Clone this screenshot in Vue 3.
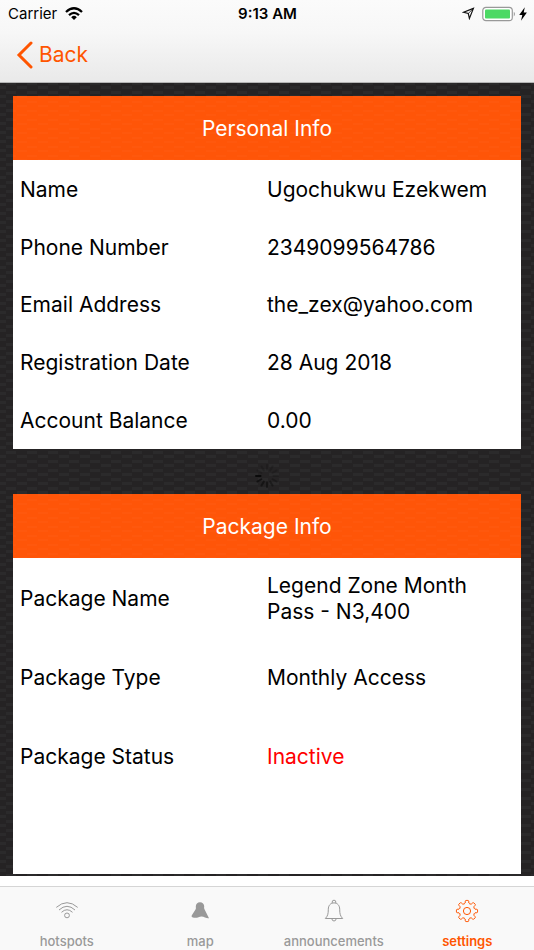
<script setup>
const personal = [
  ['Name', 'Ugochukwu Ezekwem'],
  ['Phone Number', '2349099564786'],
  ['Email Address', 'the_zex@yahoo.com'],
  ['Registration Date', '28 Aug 2018'],
  ['Account Balance', '0.00'],
]

const packageInfo = [
  { label: 'Package Name', value: 'Legend Zone Month Pass - N3,400' },
  { label: 'Package Type', value: 'Monthly Access' },
  { label: 'Package Status', value: 'Inactive', alert: true },
]

const tabs = [
  { id: 'hotspots' },
  { id: 'map' },
  { id: 'announcements' },
  { id: 'settings', active: true },
]

// Outline of an eight-toothed gear centred in a 24-unit box.
const gearPoint = (radius, degrees) => {
  const a = (degrees * Math.PI) / 180
  return `${(12 + radius * Math.sin(a)).toFixed(2)} ${(12 - radius * Math.cos(a)).toFixed(2)}`
}
const gearPath =
  Array.from({ length: 8 }, (_, i) => {
    const c = i * 45
    return (
      `${i ? 'L' : 'M'}${gearPoint(8.2, c - 13)}` +
      `L${gearPoint(9.9, c - 10)}Q${gearPoint(10.6, c - 9)} ${gearPoint(10.6, c - 5)}` +
      `L${gearPoint(10.6, c + 5)}Q${gearPoint(10.6, c + 9)} ${gearPoint(9.9, c + 10)}` +
      `L${gearPoint(8.2, c + 13)}Q${gearPoint(7, c + 22.5)} ${gearPoint(8.2, c + 32)}`
    )
  }).join('') + 'Z'

// The spinner's darkest blade points left and fades anticlockwise.
const spokes = [0.2, 0.2, 0.2, 0.2, 0.3, 0.4, 0.5, 0.55, 0.65, 0.9, 0.2, 0.2].map(
  (opacity, i) => ({ angle: i * 30, opacity }),
)
</script>

<template>
  <div class="screen">
    <header class="top">
      <div class="status">
        <span class="carrier">
          Carrier
          <svg width="18" height="14" viewBox="0 0 18 14" fill="none" stroke="#000" stroke-width="2.3" aria-hidden="true">
            <path d="M1 5Q9-2.4 17 5M4 8.2Q9 3.6 14 8.2" />
            <path d="M6.2 10.2Q9 7.5 11.8 10.2L9 13Z" fill="#000" stroke="none" />
          </svg>
        </span>
        <span class="time">9:13 AM</span>
        <span class="power">
          <svg width="13" height="13" viewBox="0 0 13 13" fill="none" stroke="#111" stroke-width="1.2" stroke-linejoin="miter" aria-hidden="true">
            <path d="M11.4 1.4 1.6 5.3 6.3 6.5 7.4 11.4Z" />
            <path d="M11.4 1.4 6.3 6.5" stroke-width=".8" />
          </svg>
          <svg width="34" height="16" viewBox="0 0 34 16" aria-hidden="true">
            <rect x=".8" y="1.3" width="29.5" height="13.4" rx="3.2" fill="#fff" stroke="#999" stroke-width="1.2" />
            <rect x="3" y="3.5" width="25" height="9" rx="1" fill="#4cd964" />
            <path d="M31.8 5.8Q33.8 8 31.8 10.4Z" fill="#888" />
          </svg>
          <svg width="8" height="14" viewBox="0 0 8 14" aria-hidden="true">
            <path d="M5.8.3.2 7.9H3.3L2 13.8 7.9 5.6H4.7Z" />
          </svg>
        </span>
      </div>
      <nav class="bar">
        <a class="back" href="#back">
          <svg width="18" height="28" viewBox="0 0 18 28" fill="none" stroke="currentColor" stroke-width="3" stroke-linecap="round" stroke-linejoin="miter" aria-hidden="true">
            <path d="M15 2 3 14 15 26" />
          </svg>
          Back
        </a>
      </nav>
    </header>

    <main class="content">
      <section class="card">
        <h2>Personal Info</h2>
        <table class="personal">
          <tbody>
            <tr v-for="[label, value] in personal" :key="label">
              <th scope="row">{{ label }}</th>
              <td>{{ value }}</td>
            </tr>
          </tbody>
        </table>
      </section>

      <div class="loading">
        <svg width="26" height="26" viewBox="-13 -13 26 26" stroke="#080808" stroke-width="2" stroke-linecap="round" aria-hidden="true">
          <path v-for="s in spokes" :key="s.angle" d="M0-6.5V-11" :transform="`rotate(${s.angle})`" :opacity="s.opacity" />
        </svg>
      </div>

      <section class="card">
        <h2>Package Info</h2>
        <table class="package">
          <tbody>
            <tr v-for="row in packageInfo" :key="row.label">
              <th scope="row">{{ row.label }}</th>
              <td :class="{ alert: row.alert }">{{ row.value }}</td>
            </tr>
            <tr>
              <td colspan="2"></td>
            </tr>
          </tbody>
        </table>
      </section>
    </main>

    <nav class="tabs">
      <a v-for="tab in tabs" :key="tab.id" :href="`#${tab.id}`" :class="{ active: tab.active }">
        <svg width="24" height="24" viewBox="0 0 24 24" fill="none" stroke="currentColor" stroke-width="1" stroke-linejoin="round" aria-hidden="true">
          <template v-if="tab.id === 'hotspots'">
            <path d="M1.3 8.4Q12-1 22.7 8.4M4 11Q12 3.6 20 11M6.5 13.3Q12 8.2 17.5 13.3" />
            <circle cx="12" cy="16.4" r="2.4" />
          </template>
          <path
            v-else-if="tab.id === 'map'"
            fill="currentColor"
            stroke="none"
            d="M12 3.2C9.5 3.2 7.8 5 7.8 7.2C7.8 8.7 8.2 9.3 7.5 10.4L3.7 16.5Q3 18.2 4.8 18.5Q8 19.3 10.5 18.2Q14 16.8 17 18.6Q19 19.4 21 19.2L16.5 10.3Q15.8 9.2 16.2 7.2C16.2 5 14.5 3.2 12 3.2Z"
          />
          <template v-else-if="tab.id === 'announcements'">
            <path d="M10.2 4.3V3A1.8 1.8 0 0 1 13.8 3V4.3" />
            <path d="M12 3.9C8.3 3.9 6.3 6.8 6.3 10.2C6.3 15.2 5.7 17 3.3 19.5H20.7C18.3 17 17.7 15.2 17.7 10.2C17.7 6.8 15.7 3.9 12 3.9Z" />
            <path d="M9.8 19.7Q10.1 22 12 22T14.2 19.7" />
          </template>
          <template v-else>
            <path :d="gearPath" />
            <circle cx="12" cy="12" r="3.6" />
          </template>
        </svg>
        <span>{{ tab.id }}</span>
      </a>
    </nav>
  </div>
</template>

<style>
body {
  background: #fff;
}
</style>

<style scoped>
.screen {
  display: flex;
  flex-direction: column;
  min-height: 100vh;
  font-family: Inter, "Liberation Sans", sans-serif;
  color: #000;
}

.top {
  background: linear-gradient(#fbfbfb, #f7f7f7 40%, #e9e9e9);
  border-bottom: 1px solid #b4b4b4;
}

.status {
  display: grid;
  grid-template-columns: 1fr auto 1fr;
  align-items: center;
  height: 27px;
  padding: 0 7px 0 8px;
  font-size: 15px;
}

.carrier,
.power {
  display: flex;
  align-items: center;
  gap: 8px;
}

.power {
  justify-content: flex-end;
  gap: 3px;
}

.power svg:first-child {
  margin-right: 4px;
}

.time {
  font-weight: 600;
}

.bar {
  display: flex;
  align-items: center;
  height: 55px;
  padding: 0 16px;
}

.back {
  display: flex;
  align-items: center;
  gap: 5px;
  font-size: 21px;
  color: #ff5500;
  text-decoration: none;
}

.content {
  padding: 13px 13px 2px;
  background-color: #252324;
  background-image:
    conic-gradient(at 10px 3px, transparent 75%, #2b2a2b 0),
    conic-gradient(at 10px 3px, transparent 75%, #2b2a2b 0);
  background-size: 21px 9px;
  background-position: -4px 3px, 6px 8px;
}

.card {
  background: #fff;
}

h2 {
  display: flex;
  align-items: center;
  justify-content: center;
  height: 64px;
  margin: 0;
  background-color: #ff5508;
  background-image:
    conic-gradient(at 10px 2px, transparent 75%, #ff580d 0),
    conic-gradient(at 10px 2px, transparent 75%, #ff580d 0);
  background-size: 21px 9px;
  background-position: 4px 0, 14px 5px;
  color: #fff;
  font-size: 21px;
  font-weight: 400;
}

table {
  width: 100%;
  table-layout: fixed;
  border-collapse: collapse;
  font-size: 21px;
  line-height: 26px;
}

.personal {
  height: 289px;
}

.package {
  height: 316px;
}

.package tr {
  height: 25%;
}

th,
td {
  padding: 2px 24px 0 0;
  text-align: left;
  font-weight: 400;
}

th {
  padding: 2px 0 0 7px;
}

.alert {
  color: #f00;
}

.loading {
  display: flex;
  align-items: center;
  justify-content: center;
  height: 37px;
  padding-top: 8px;
}

.tabs {
  display: grid;
  grid-template-columns: repeat(4, 1fr);
  margin-top: auto;
  height: 63px;
  border-top: 1px solid #d5d5d5;
  background: #f9f9f9;
}

.tabs a {
  display: flex;
  flex-direction: column;
  align-items: center;
  gap: 10px;
  padding-top: 12px;
  color: #999;
  font-size: 13px;
  font-weight: 500;
  line-height: 16px;
  text-decoration: none;
}

.tabs .active {
  color: #ff5500;
  font-weight: 600;
}
</style>
